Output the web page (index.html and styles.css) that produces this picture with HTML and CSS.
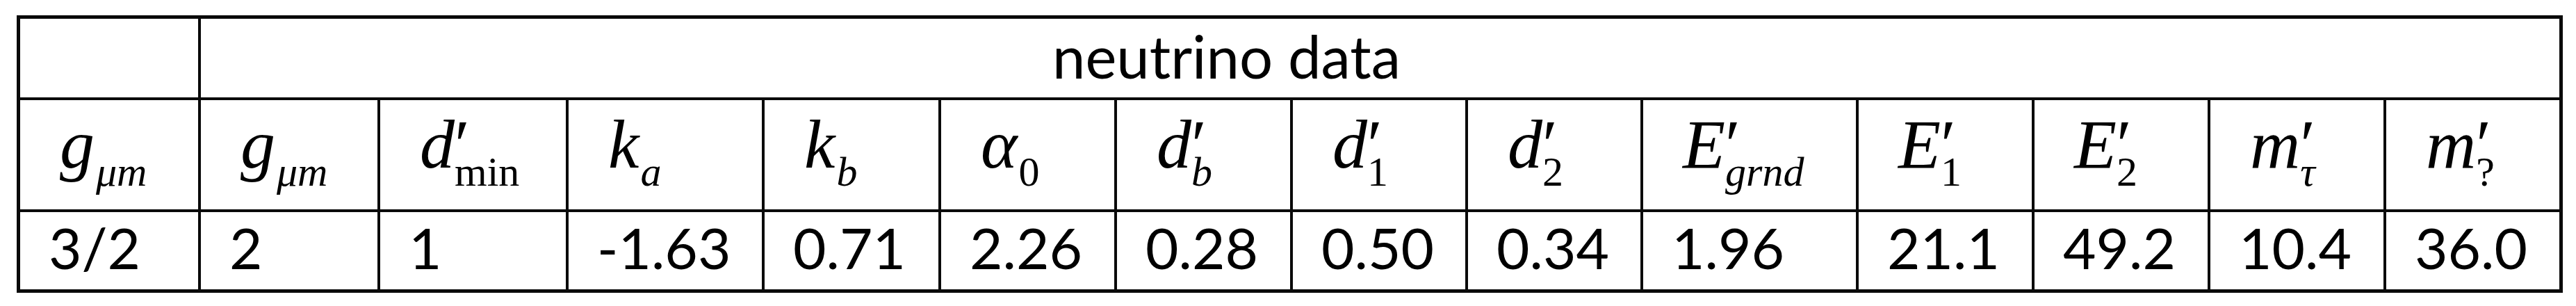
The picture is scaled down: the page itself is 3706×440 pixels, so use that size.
FILE: index.html
```html
<!DOCTYPE html>
<html lang="en">
<head>
<meta charset="utf-8">
<title>neutrino data</title>
<link rel="stylesheet" href="styles.css">
</head>
<body>
<div class="tbl">
  <div class="c blank"></div>
  <div class="c title">neutrino data</div>

  <div class="c h"><i>g</i><span class="sub"><i>μm</i></span></div>
  <div class="c h"><i>g</i><span class="sub"><i>μm</i></span></div>
  <div class="c h"><i>d</i><span class="st"><span class="p">′</span><span class="b">min</span></span></div>
  <div class="c h"><i>k</i><span class="sub"><i>a</i></span></div>
  <div class="c h"><i>k</i><span class="sub"><i>b</i></span></div>
  <div class="c h"><i>α</i><span class="sub">0</span></div>
  <div class="c h"><i>d</i><span class="st"><span class="p">′</span><span class="b"><i>b</i></span></span></div>
  <div class="c h"><i>d</i><span class="st"><span class="p">′</span><span class="b">1</span></span></div>
  <div class="c h"><i>d</i><span class="st"><span class="p">′</span><span class="b">2</span></span></div>
  <div class="c h"><i>E</i><span class="st"><span class="p">′</span><span class="b"><i>grnd</i></span></span></div>
  <div class="c h"><i>E</i><span class="st"><span class="p">′</span><span class="b">1</span></span></div>
  <div class="c h"><i>E</i><span class="st"><span class="p">′</span><span class="b">2</span></span></div>
  <div class="c h"><i>m</i><span class="st"><span class="p">′</span><span class="b"><i>τ</i></span></span></div>
  <div class="c h"><i>m</i><span class="st"><span class="p">′</span><span class="b">?</span></span></div>

  <div class="c d">3/2</div>
  <div class="c d">2</div>
  <div class="c d">1</div>
  <div class="c d">-1.63</div>
  <div class="c d">0.71</div>
  <div class="c d">2.26</div>
  <div class="c d">0.28</div>
  <div class="c d">0.50</div>
  <div class="c d">0.34</div>
  <div class="c d">1.96</div>
  <div class="c d">21.1</div>
  <div class="c d">49.2</div>
  <div class="c d">10.4</div>
  <div class="c d">36.0</div>
</div>
</body>
</html>
```

FILE: styles.css
```css
html, body {
  margin: 0;
  background: #ffffff;
}

body {
  padding: 22px 0 0 24px;
}

.tbl {
  display: grid;
  width: max-content;
  grid-template-columns: 256px 254px 267px 278px 250px 249px 249px 248px 248px 306px 249px 249px 249px 249px;
  grid-template-rows: 113px 157px 111px;
  gap: 4px;
  padding: 5px;
  background: #0a0a0a;
}

.c {
  background: #ffffff;
  color: #000000;
  white-space: nowrap;
}

.title {
  grid-column: 2 / span 13;
  font-family: Lato, "Open Sans", sans-serif;
  font-size: 85px;
  line-height: 106px;
  padding-left: 1225px;
}

.h {
  font-family: "Liberation Serif", "Times New Roman", serif;
  font-size: 100px;
  line-height: 128px;
  padding-left: 57px;
}

.h i {
  font-style: italic;
}

.sub {
  font-size: 60px;
  vertical-align: -26px;
  font-style: normal;
  margin-left: 2px;
}

.st {
  display: inline-flex;
  flex-direction: column;
  align-items: flex-start;
}

.p {
  font-size: 100px;
  line-height: 29px;
  font-style: normal;
}

.b {
  font-size: 60px;
  line-height: 50px;
  font-style: normal;
}

.d {
  font-family: Lato, "Open Sans", sans-serif;
  font-size: 82px;
  line-height: 100px;
  padding-left: 41px;
}
```
